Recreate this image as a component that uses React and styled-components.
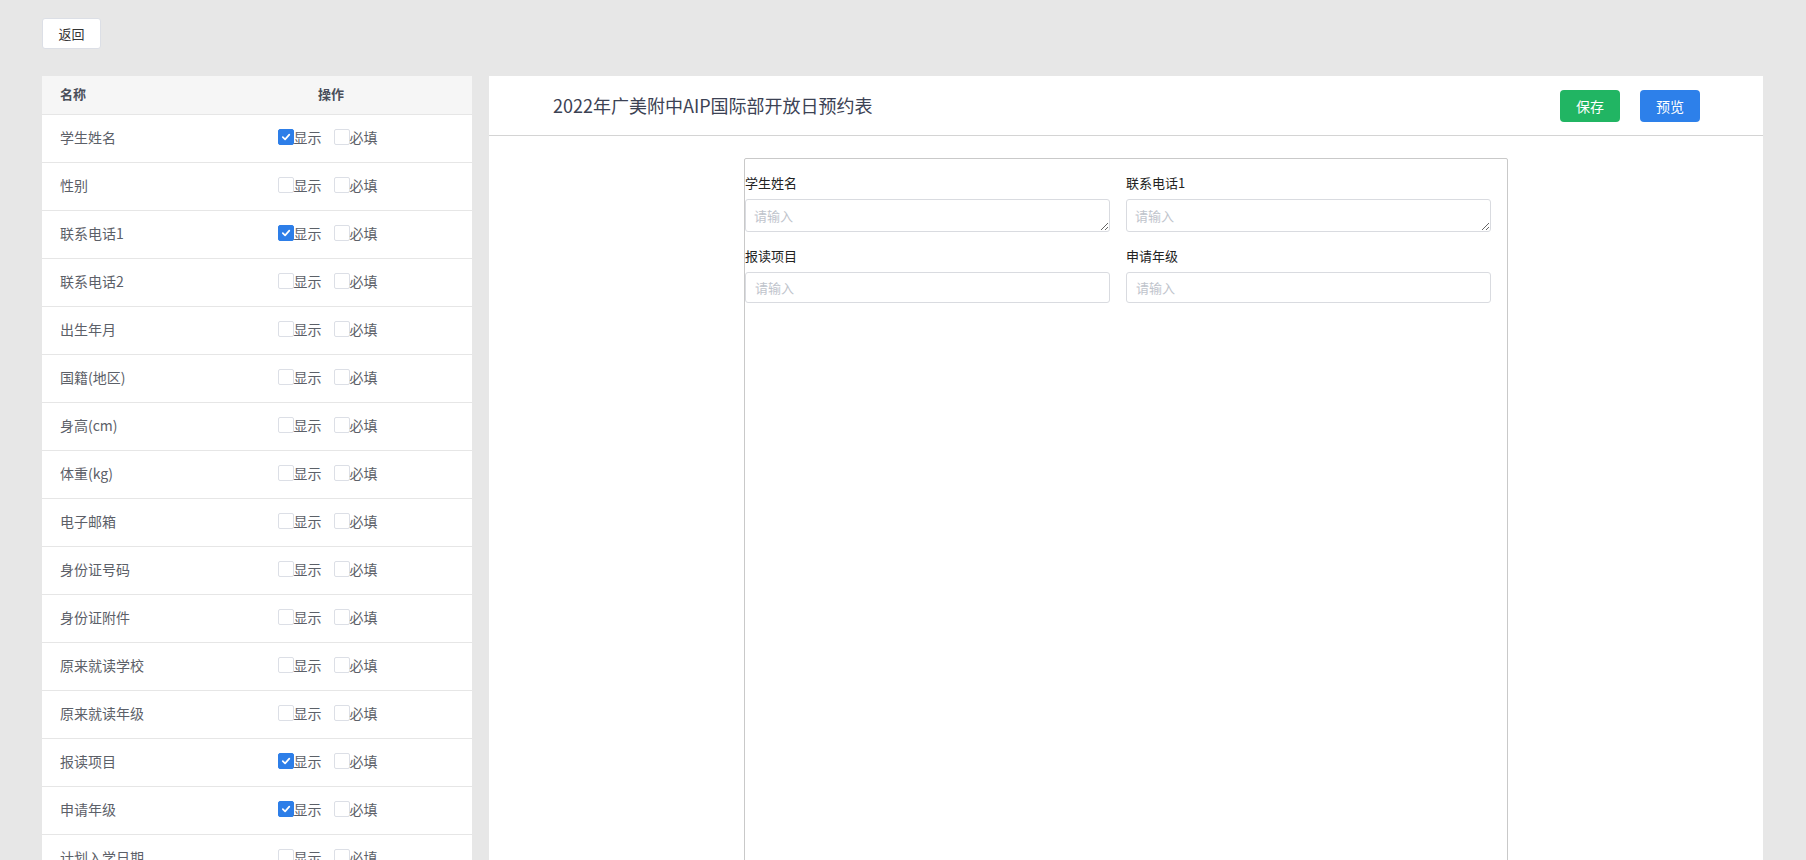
import React from 'react';
import styled, { createGlobalStyle } from 'styled-components';

const GlobalStyle = createGlobalStyle`
  html, body {
    margin: 0;
    padding: 0;
    background: #e7e7e7;
    font-family: "Noto Sans CJK SC", "Noto Sans", "Liberation Sans", sans-serif;
  }
  * { box-sizing: border-box; }
`;

const fields = [
  { name: '学生姓名', show: true },
  { name: '性别' },
  { name: '联系电话1', show: true },
  { name: '联系电话2' },
  { name: '出生年月' },
  { name: '国籍(地区)' },
  { name: '身高(cm)' },
  { name: '体重(kg)' },
  { name: '电子邮箱' },
  { name: '身份证号码' },
  { name: '身份证附件' },
  { name: '原来就读学校' },
  { name: '原来就读年级' },
  { name: '报读项目', show: true },
  { name: '申请年级', show: true },
  { name: '计划入学日期' },
  { name: '家长姓名' },
  { name: '备注' },
];

const formFields = [
  { label: '学生姓名', multi: true },
  { label: '联系电话1', multi: true },
  { label: '报读项目' },
  { label: '申请年级' },
];

const Page = styled.div`
  padding: 18px 43px 0 42px;
`;

const BackButton = styled.button`
  display: block;
  width: 59px;
  height: 31px;
  background: #fff;
  border: 1px solid #dcdfe6;
  border-radius: 3px;
  font-family: inherit;
  font-size: 13px;
  line-height: 20px;
  color: #333;
  padding: 0;
  cursor: pointer;
`;

const Main = styled.div`
  display: flex;
  gap: 17px;
  margin-top: 27px;
  align-items: flex-start;
`;

const FieldPanel = styled.div`
  width: 430px;
  flex-shrink: 0;
  background: #fff;
`;

const TableRow = styled.div`
  display: grid;
  grid-template-columns: 148px 1fr;
  align-items: center;
  height: ${(p) => (p.$head ? '39px' : '48px')};
  background: ${(p) => (p.$head ? '#f6f6f6' : '#fff')};
  border-bottom: 1px solid #e6e6e6;
`;

const NameCell = styled.div`
  padding-left: 18px;
  font-size: ${(p) => (p.$head ? '13px' : '14px')};
  line-height: 20px;
  font-weight: ${(p) => (p.$head ? 700 : 400)};
  color: ${(p) => (p.$head ? '#4a4f5b' : '#5c6068')};
  white-space: nowrap;
  margin-top: -3px;
`;

const OpCell = styled.div`
  display: flex;
  justify-content: center;
  align-items: center;
  gap: 12px;
  padding-right: ${(p) => (p.$head ? '0' : '7px')};
  font-size: 13px;
  line-height: 20px;
  font-weight: 700;
  color: #4a4f5b;
  margin-top: -3px;
`;

const CheckLabel = styled.label`
  display: flex;
  align-items: center;
  font-size: 14px;
  line-height: 20px;
  font-weight: 400;
  color: #5c6068;
  cursor: pointer;
`;

const Box = styled.span`
  flex-shrink: 0;
  width: 16px;
  height: 16px;
  border-radius: 2px;
  border: 1px solid ${(p) => (p.$on ? '#2d7ee8' : '#dcdfe6')};
  background: ${(p) => (p.$on ? '#2d7ee8' : '#fff')};
  display: flex;
  align-items: center;
  justify-content: center;
`;

const Check = ({ on, text }) => (
  <CheckLabel>
    <Box $on={on}>
      {on && (
        <svg width="10" height="10" viewBox="0 0 10 10">
          <path d="M1.8 5.2 L4.1 7.4 L8.3 2.6" fill="none" stroke="#fff" strokeWidth="1.7" strokeLinecap="round" strokeLinejoin="round" />
        </svg>
      )}
    </Box>
    {text}
  </CheckLabel>
);

const Editor = styled.div`
  flex: 1;
  background: #fff;
  min-height: 900px;
`;

const EditorHead = styled.div`
  height: 60px;
  border-bottom: 1px solid #d4d4d4;
  display: flex;
  align-items: center;
  padding: 0 63px 0 64px;
`;

const Title = styled.h1`
  flex: 1;
  margin: 0 0 1px;
  font-size: 18px;
  line-height: 26px;
  font-weight: 400;
  color: #3c4254;
`;

const ActionButton = styled.button`
  width: 60px;
  height: 32px;
  margin-left: 20px;
  border: none;
  border-radius: 4px;
  background: ${(p) => p.$color};
  color: #fff;
  font-family: inherit;
  font-size: 14px;
  line-height: 20px;
  cursor: pointer;
`;

const EditorBody = styled.div`
  padding-top: 22px;
  display: flex;
  justify-content: center;
`;

const FormBox = styled.div`
  width: 764px;
  min-height: 820px;
  border: 1px solid #c9c9c9;
  border-radius: 2px;
  display: grid;
  grid-template-columns: 1fr 1fr;
  align-content: start;
`;

const FormField = styled.div`
  padding: 14px 16px 0 0;
`;

const FieldLabel = styled.div`
  font-size: 13px;
  line-height: 20px;
  color: #222;
  margin-bottom: 6px;
`;

const controlStyle = `
  display: block;
  width: 100%;
  border: 1px solid #d9dbe0;
  border-radius: 3px;
  font-family: inherit;
  font-size: 13px;
  color: #333;
  background: #fff;
  outline: none;
  &::placeholder { color: #c0c4cc; }
`;

const TextArea = styled.textarea`
  ${controlStyle}
  height: 33px;
  padding: 6px 8px;
  line-height: 19px;
  resize: vertical;
`;

const TextInput = styled.input`
  ${controlStyle}
  height: 31px;
  padding: 0 9px;
`;

export default function App() {
  return (
    <Page>
      <GlobalStyle />
      <BackButton>返回</BackButton>
      <Main>
        <FieldPanel>
          <TableRow $head>
            <NameCell $head>名称</NameCell>
            <OpCell $head>操作</OpCell>
          </TableRow>
          {fields.map((f) => (
            <TableRow key={f.name}>
              <NameCell>{f.name}</NameCell>
              <OpCell>
                <Check on={!!f.show} text="显示" />
                <Check on={false} text="必填" />
              </OpCell>
            </TableRow>
          ))}
        </FieldPanel>
        <Editor>
          <EditorHead>
            <Title>2022年广美附中AIP国际部开放日预约表</Title>
            <ActionButton $color="#21b563">保存</ActionButton>
            <ActionButton $color="#2d80ea">预览</ActionButton>
          </EditorHead>
          <EditorBody>
            <FormBox>
              {formFields.map((f) => (
                <FormField key={f.label}>
                  <FieldLabel>{f.label}</FieldLabel>
                  {f.multi ? (
                    <TextArea rows={1} placeholder="请输入" />
                  ) : (
                    <TextInput placeholder="请输入" />
                  )}
                </FormField>
              ))}
            </FormBox>
          </EditorBody>
        </Editor>
      </Main>
    </Page>
  );
}
